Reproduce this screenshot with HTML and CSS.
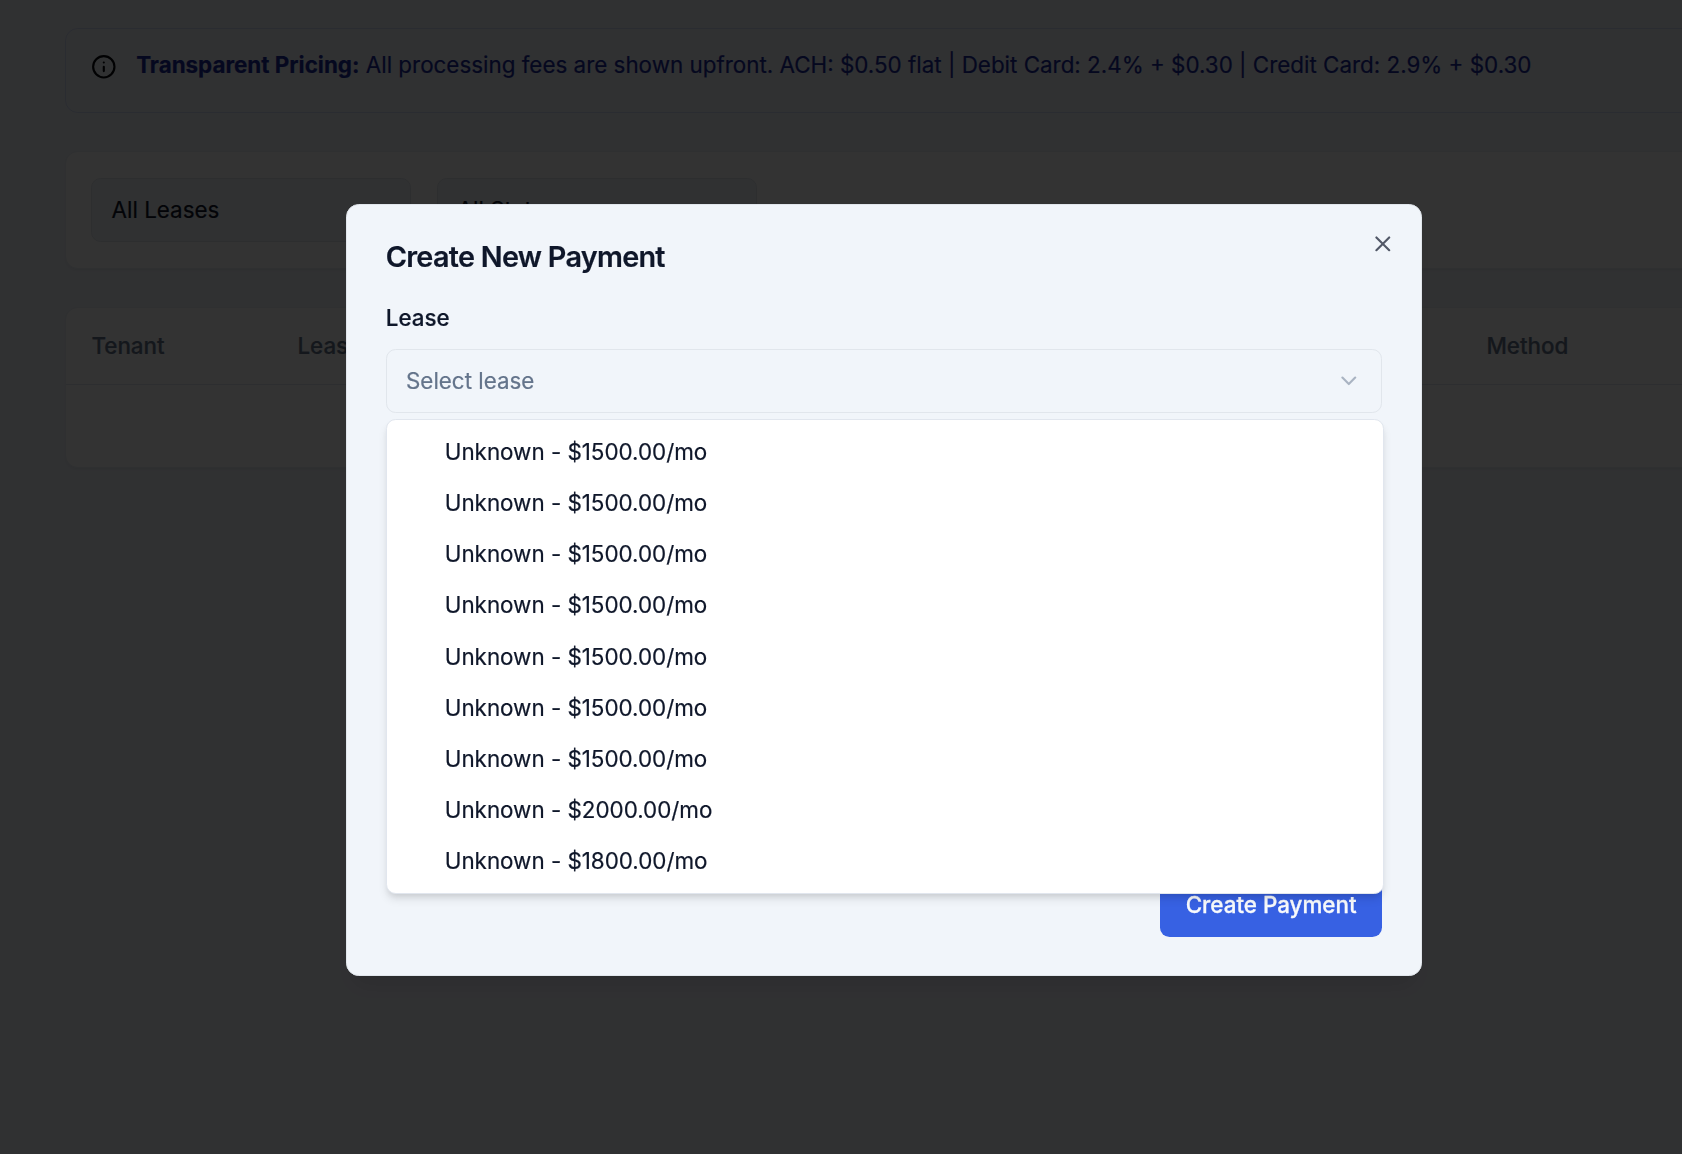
FILE: index.html
```html
<!DOCTYPE html>
<html lang="en">
<head>
<meta charset="utf-8">
<title>Payments</title>
<link rel="stylesheet" href="styles.css">
</head>
<body>
<main class="page">
  <section class="alert">
    <svg class="alert-icon" viewBox="0 0 24 24" fill="none" stroke="currentColor" stroke-width="2" stroke-linecap="round" stroke-linejoin="round"><circle cx="12" cy="12" r="10"/><path d="M12 16v-4M12 8h.01"/></svg>
    <p class="alert-text"><strong>Transparent Pricing:</strong> All processing fees are shown upfront. ACH: $0.50 flat | Debit Card: 2.4% + $0.30 | Credit Card: 2.9% + $0.30</p>
  </section>
  <section class="card filters">
    <div class="select filter">All Leases</div>
    <div class="select filter">All Statuses</div>
  </section>
  <section class="card table">
    <div class="table-head"><span>Tenant</span><span>Lease</span><span>Method</span></div>
    <div class="table-row"></div>
  </section>
</main>
<div class="overlay">
  <div class="dialog" role="dialog">
    <svg class="close" viewBox="0 0 24 24" fill="none" stroke="currentColor" stroke-width="2" stroke-linecap="round" stroke-linejoin="round"><path d="M18 6 6 18M6 6l12 12"/></svg>
    <h2 class="title">Create New Payment</h2>
    <div class="field">
      <label class="label">Lease</label>
      <div class="select placeholder">Select lease
        <svg class="chevron" viewBox="0 0 24 24" fill="none" stroke="currentColor" stroke-width="2" stroke-linecap="round" stroke-linejoin="round"><path d="m6 9 6 6 6-6"/></svg>
      </div>
      <div class="menu">
        <div class="item">Unknown - $1500.00/mo</div>
        <div class="item">Unknown - $1500.00/mo</div>
        <div class="item">Unknown - $1500.00/mo</div>
        <div class="item">Unknown - $1500.00/mo</div>
        <div class="item">Unknown - $1500.00/mo</div>
        <div class="item">Unknown - $1500.00/mo</div>
        <div class="item">Unknown - $1500.00/mo</div>
        <div class="item">Unknown - $2000.00/mo</div>
        <div class="item">Unknown - $1800.00/mo</div>
      </div>
    </div>
    <div class="field"><div class="label"></div><div class="select"></div></div>
    <div class="field"><div class="label"></div><div class="select"></div></div>
    <div class="select textarea"></div>
    <button class="submit">Create Payment</button>
  </div>
</div>
</body>
</html>
```
FILE: styles.css
```css
* { box-sizing: border-box; }
body {
  margin: 0;
  height: 1154px;
  overflow: hidden;
  background: #f1f5fb;
  color: #0f172a;
  font: 400 22.4px/32px Inter, sans-serif;
  -webkit-text-stroke: .2px currentColor;
}
.page {
  display: flex;
  flex-direction: column;
  gap: 38.4px;
  width: 1750px;
  padding: 28px 0 0 65.2px;
}
.alert {
  display: flex;
  gap: 19.2px;
  height: 85px;
  padding: 24.6px 25.2px;
  border: 1px solid #d3dbf5;
  border-radius: 12.8px;
  background: #f0f5fb;
}
.alert-icon { width: 25.6px; height: 25.6px; color: #05070c; }
.alert-text { margin: -6.4px 0 0; line-height: 36.4px; color: #1c2b9c; white-space: nowrap; }
.alert-text strong { font-weight: 700; }
.card {
  border: 1px solid #e9eef4;
  border-radius: 12.8px;
  background: #fff;
  box-shadow: 0 1.6px 3.2px rgba(0, 0, 0, .05);
}
.filters { display: flex; gap: 26px; height: 117.6px; padding: 25.6px 25.2px; }
.select {
  display: flex;
  align-items: center;
  justify-content: space-between;
  height: 64px;
  padding: 0 19.2px;
  border: 1px solid #e1e6ec;
  border-radius: 9.6px;
  background: #f1f5fa;
}
.filter { width: 320px; }
.table { height: 161px; }
.table-head {
  display: grid;
  grid-template-columns: 206px 1189px 1fr;
  align-items: center;
  height: 76.8px;
  padding: 0 25.2px;
  border-bottom: 1px solid #e1e6ee;
  color: #64748b;
  font-weight: 500;
}
.overlay {
  position: fixed;
  inset: 0;
  background: rgba(0, 0, 0, .8);
}
.dialog {
  position: absolute;
  left: 346.4px;
  top: 204px;
  display: flex;
  flex-direction: column;
  gap: 25.6px;
  width: 1075.2px;
  height: 772px;
  padding: 38.4px;
  border: 1px solid #e1e6ec;
  border-radius: 12.8px;
  background: #f1f5fa;
  box-shadow: 0 16px 24px -4.8px rgba(0, 0, 0, .1), 0 6.4px 9.6px -6.4px rgba(0, 0, 0, .1);
}
.close {
  position: absolute;
  right: 25.4px;
  top: 25.6px;
  width: 25.6px;
  height: 25.6px;
  opacity: .7;
}
.title {
  margin: 0;
  font-size: 28.8px;
  line-height: 28.8px;
  font-weight: 600;
  letter-spacing: -.72px;
}
.field { position: relative; display: flex; flex-direction: column; gap: 12.8px; }
.label { height: 38.4px; line-height: 40.4px; font-weight: 500; }
.placeholder { color: #64748b; }
.chevron { width: 25.6px; height: 25.6px; opacity: .5; }
.menu {
  position: absolute;
  z-index: 1;
  left: .6px;
  top: 121.2px;
  width: 997.2px;
  height: 474.8px;
  padding: 6.1px 6.4px;
  border: 1px solid #e1e6ee;
  border-radius: 9.6px;
  background: #fff;
  box-shadow: 0 6.4px 9.6px -1.6px rgba(0, 0, 0, .1), 0 3.2px 6.4px -3.2px rgba(0, 0, 0, .1);
}
.item { height: 51.15px; padding: 0 12.8px 0 51px; line-height: 51.2px; letter-spacing: -.02px; }
.textarea { height: 128px; flex: none; }
.submit {
  align-self: flex-end;
  flex: none;
  height: 64px;
  margin-top: -.9px;
  padding: 0 25.6px;
  border: 0;
  border-radius: 9.6px;
  background: #3761e3;
  color: #f8fafc;
  font: 500 22.4px/32px Inter, sans-serif;
  -webkit-text-stroke: .3px currentColor;
}
```
